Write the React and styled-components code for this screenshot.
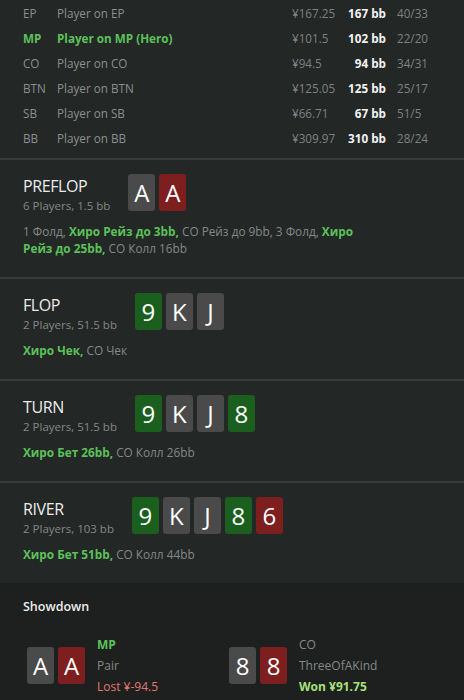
import React from 'react';
import styled, { createGlobalStyle } from 'styled-components';

const GlobalStyle = createGlobalStyle`
  body {
    margin: 0;
    background: #232726;
    font-family: "Open Sans", "Noto Sans", sans-serif;
    color: #8c8f8e;
  }
`;

const Page = styled.div`
  width: 464px;
  background: #232726;
`;

const PlayerTable = styled.div`
  padding: 0 23px 8px 23px;
`;

const PlayerRow = styled.div`
  display: grid;
  grid-template-columns: 34px 1fr 48px 46px 55px;
  align-items: center;
  height: 25px;
  font-size: 11.7px;
  color: ${(props) => (props.hero ? '#5cc15a' : '#8c8f8e')};
  font-weight: ${(props) => (props.hero ? 700 : 400)};
`;

const Stack = styled.span`
  color: #7f8281;
  font-weight: 400;
`;

const BB = styled.span`
  text-align: right;
  color: #f2f2f2;
  font-weight: 700;
`;

const Ratio = styled.span`
  padding-left: 11px;
  color: #7f8281;
  font-weight: 400;
`;

const Street = styled.section`
  border-top: 2px solid #383c3b;
  padding: 14px 23px 20px 23px;
`;

const StreetHeader = styled.div`
  display: flex;
  align-items: flex-start;
  gap: 18px;
`;

const StreetInfo = styled.div`
  display: flex;
  flex-direction: column;
`;

const StreetTitle = styled.div`
  font-size: 16px;
  line-height: 24px;
  color: #ececec;
  letter-spacing: -0.4px;
`;

const StreetSub = styled.div`
  font-size: 11.5px;
  line-height: 16px;
  color: #858887;
`;

const Cards = styled.div`
  display: flex;
  gap: 4px;
`;

const cardColors = {
  grey: '#4a4a4a',
  red: '#7d1f1f',
  green: '#1b5f1e',
};

const Card = styled.div`
  width: 27px;
  height: 37px;
  border-radius: 3px;
  background: ${(props) => cardColors[props.color] || cardColors.grey};
  color: #ffffff;
  font-size: 24px;
  display: flex;
  align-items: center;
  justify-content: center;
`;

const Actions = styled.div`
  margin-top: 9px;
  max-width: 340px;
  font-size: 11.8px;
  line-height: 17px;
  color: #858887;
`;

const Hero = styled.b`
  color: #5cc15a;
  font-weight: 700;
`;

const Showdown = styled.section`
  background: #1d201f;
  padding: 15px 23px 0 23px;
  min-height: 115px;
`;

const ShowdownTitle = styled.div`
  font-size: 12.5px;
  line-height: 18px;
  color: #ececec;
  font-weight: 600;
`;

const ShowdownRow = styled.div`
  display: grid;
  grid-template-columns: 202px 1fr;
  margin-top: 18px;
  padding-left: 4px;
`;

const ShowdownPlayer = styled.div`
  display: flex;
  align-items: center;
  gap: 12px;
`;

const ShowdownInfo = styled.div`
  display: flex;
  flex-direction: column;
  font-size: 12px;
  line-height: 21px;
`;

const ShowdownName = styled.span`
  color: ${(props) => (props.hero ? '#5cc15a' : '#858887')};
  font-weight: ${(props) => (props.hero ? 700 : 400)};
`;

const HandName = styled.span`
  color: #858887;
`;

const Result = styled.span`
  color: ${(props) => (props.won ? '#a6e07a' : '#e07a6c')};
  font-weight: ${(props) => (props.won ? 700 : 400)};
`;

const players = [
  { pos: 'EP', name: 'Player on EP', stack: '¥167.25', bb: '167 bb', ratio: '40/33' },
  { pos: 'MP', name: 'Player on MP (Hero)', stack: '¥101.5', bb: '102 bb', ratio: '22/20', hero: true },
  { pos: 'CO', name: 'Player on CO', stack: '¥94.5', bb: '94 bb', ratio: '34/31' },
  { pos: 'BTN', name: 'Player on BTN', stack: '¥125.05', bb: '125 bb', ratio: '25/17' },
  { pos: 'SB', name: 'Player on SB', stack: '¥66.71', bb: '67 bb', ratio: '51/5' },
  { pos: 'BB', name: 'Player on BB', stack: '¥309.97', bb: '310 bb', ratio: '28/24' },
];

const board = [
  ['9', 'green'],
  ['K', 'grey'],
  ['J', 'grey'],
  ['8', 'green'],
  ['6', 'red'],
];

const streets = [
  {
    title: 'PREFLOP',
    sub: '6 Players, 1.5 bb',
    cards: [['A', 'grey'], ['A', 'red']],
    actions: (
      <>
        1 Фолд, <Hero>Хиро Рейз до 3bb,</Hero> CO Рейз до 9bb, 3 Фолд, <Hero>Хиро Рейз до 25bb,</Hero> CO Колл 16bb
      </>
    ),
  },
  {
    title: 'FLOP',
    sub: '2 Players, 51.5 bb',
    cards: board.slice(0, 3),
    actions: (
      <>
        <Hero>Хиро Чек,</Hero> CO Чек
      </>
    ),
  },
  {
    title: 'TURN',
    sub: '2 Players, 51.5 bb',
    cards: board.slice(0, 4),
    actions: (
      <>
        <Hero>Хиро Бет 26bb,</Hero> CO Колл 26bb
      </>
    ),
  },
  {
    title: 'RIVER',
    sub: '2 Players, 103 bb',
    cards: board,
    actions: (
      <>
        <Hero>Хиро Бет 51bb,</Hero> CO Колл 44bb
      </>
    ),
  },
];

function App() {
  return (
    <>
      <GlobalStyle />
      <Page>
        <PlayerTable>
          {players.map((p) => (
            <PlayerRow key={p.pos} hero={p.hero}>
              <span>{p.pos}</span>
              <span>{p.name}</span>
              <Stack>{p.stack}</Stack>
              <BB>{p.bb}</BB>
              <Ratio>{p.ratio}</Ratio>
            </PlayerRow>
          ))}
        </PlayerTable>

        {streets.map((s) => (
          <Street key={s.title}>
            <StreetHeader>
              <StreetInfo>
                <StreetTitle>{s.title}</StreetTitle>
                <StreetSub>{s.sub}</StreetSub>
              </StreetInfo>
              <Cards>
                {s.cards.map(([rank, color], i) => (
                  <Card key={i} color={color}>{rank}</Card>
                ))}
              </Cards>
            </StreetHeader>
            <Actions>{s.actions}</Actions>
          </Street>
        ))}

        <Showdown>
          <ShowdownTitle>Showdown</ShowdownTitle>
          <ShowdownRow>
            <ShowdownPlayer>
              <Cards>
                <Card color="grey">A</Card>
                <Card color="red">A</Card>
              </Cards>
              <ShowdownInfo>
                <ShowdownName hero>MP</ShowdownName>
                <HandName>Pair</HandName>
                <Result>Lost ¥-94.5</Result>
              </ShowdownInfo>
            </ShowdownPlayer>
            <ShowdownPlayer>
              <Cards>
                <Card color="grey">8</Card>
                <Card color="red">8</Card>
              </Cards>
              <ShowdownInfo>
                <ShowdownName>CO</ShowdownName>
                <HandName>ThreeOfAKind</HandName>
                <Result won>Won ¥91.75</Result>
              </ShowdownInfo>
            </ShowdownPlayer>
          </ShowdownRow>
        </Showdown>
      </Page>
    </>
  );
}

export default App;
